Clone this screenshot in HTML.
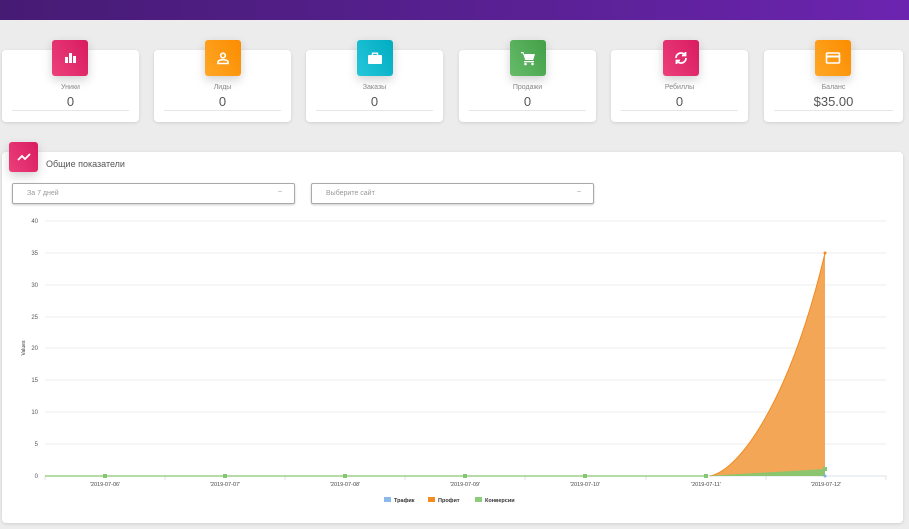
<!DOCTYPE html>
<html><head><meta charset="utf-8"><style>
*{box-sizing:border-box;margin:0;padding:0}
body{width:909px;height:529px;overflow:hidden;background:#ececec;font-family:"Liberation Sans","DejaVu Sans",sans-serif;position:relative}
.hdr{position:absolute;left:0;top:0;width:909px;height:20px;background:linear-gradient(90deg,#461b74,#5a2195 60%,#6c24b0)}
.card{position:absolute;top:50px;height:72px;background:#fff;border-radius:4px;box-shadow:0 1px 3px rgba(0,0,0,.12)}
.ic{position:absolute;top:-10px;width:36px;height:36px;border-radius:3px;box-shadow:0 4px 10px rgba(0,0,0,.18);display:flex;align-items:center;justify-content:center}
.lbl{position:absolute;top:34px;width:100%;text-align:center;font-size:7px;color:#888}
.val{position:absolute;top:44px;width:100%;text-align:center;font-size:13px;color:#555}
.ln{position:absolute;left:10px;right:10px;top:60px;border-top:1px solid #e6e6e6}
.pink{background:linear-gradient(60deg,#ec407a,#d81b60)}
.orange{background:linear-gradient(60deg,#ffa726,#fb8c00)}
.cyan{background:linear-gradient(60deg,#26c6da,#00acc1)}
.green{background:linear-gradient(60deg,#66bb6a,#43a047)}
.big{position:absolute;left:2px;top:152px;width:901px;height:371px;background:#fff;border-radius:4px;box-shadow:0 1px 3px rgba(0,0,0,.12)}
.sel{position:absolute;top:183px;height:21px;border:1px solid #aaa;border-radius:2px;background:#fff;box-shadow:0 1px 2px rgba(0,0,0,.2);font-size:7px;color:#999;padding:6px 14px}
.sel span{position:absolute;right:12px;top:4px;font-size:7px}
</style></head><body>
<div class="hdr"></div>

<div class="card" style="left:2px;width:137px"><div class="ic pink" style="left:50px"><svg width="14" height="14" viewBox="0 0 14 14" fill="#fff"><rect x="2" y="6" width="3" height="6"/><rect x="6" y="2" width="3" height="10"/><rect x="10" y="5" width="3" height="7"/></svg></div><div class="lbl">Уники</div><div class="val">0</div><div class="ln"></div></div>
<div class="card" style="left:154px;width:137px"><div class="ic orange" style="left:51px"><svg width="14" height="14" viewBox="0 0 14 14" fill="none" stroke="#fff" stroke-width="1.6"><circle cx="7" cy="4.5" r="2.3"/><path d="M2 12.5v-1.5c0-1.5 3-2.3 5-2.3s5 .8 5 2.3v1.5z"/></svg></div><div class="lbl">Лиды</div><div class="val">0</div><div class="ln"></div></div>
<div class="card" style="left:306px;width:137px"><div class="ic cyan" style="left:51px"><svg width="16" height="14" viewBox="0 0 16 14" fill="#fff"><rect x="1" y="4" width="14" height="9" rx="1"/><path d="M5.5 4V2.2h5V4" stroke="#fff" stroke-width="1.4" fill="none"/></svg></div><div class="lbl">Заказы</div><div class="val">0</div><div class="ln"></div></div>
<div class="card" style="left:459px;width:137px"><div class="ic green" style="left:51px"><svg width="16" height="16" viewBox="0 0 16 16" fill="#fff"><path d="M1 2h2.5l.6 2H15l-1.8 6H5.2L3 3.4H1z"/><rect x="4" y="11" width="10" height="1.3"/><circle cx="5.5" cy="14" r="1.3"/><circle cx="12.5" cy="14" r="1.3"/></svg></div><div class="lbl">Продажи</div><div class="val">0</div><div class="ln"></div></div>
<div class="card" style="left:611px;width:137px"><div class="ic pink" style="left:52px"><svg width="16" height="16" viewBox="0 0 16 16" fill="none" stroke="#fff" stroke-width="1.8"><path d="M3 8a5 5 0 0 1 9-3"/><path d="M13 8a5 5 0 0 1-9 3"/><path d="M12.5 2v3.5H9" /><path d="M3.5 14v-3.5H7"/></svg></div><div class="lbl">Ребиллы</div><div class="val">0</div><div class="ln"></div></div>
<div class="card" style="left:764px;width:139px"><div class="ic orange" style="left:51px"><svg width="16" height="14" viewBox="0 0 16 14" fill="none" stroke="#fff" stroke-width="1.6"><rect x="1.5" y="2" width="13" height="10" rx="1"/><path d="M1.5 5.5h13" stroke-width="2"/></svg></div><div class="lbl">Баланс</div><div class="val">$35.00</div><div class="ln"></div></div>

<div class="big"></div>
<div class="ic pink" style="position:absolute;left:9px;top:142px;width:29px;height:30px"><svg width="14" height="10" viewBox="0 0 14 10" fill="none" stroke="#fff" stroke-width="1.8"><path d="M1 8l4-4 3 3 5-5"/></svg></div>
<div style="position:absolute;left:46px;top:159px;font-size:9px;color:#555">Общие показатели</div>
<div class="sel" style="left:12px;width:283px">За 7 дней<span>–</span></div>
<div class="sel" style="left:311px;width:283px">Выберите сайт<span>–</span></div>

<svg style="position:absolute;left:0;top:0" width="909" height="529" font-family="Liberation Sans, sans-serif">
<g stroke="#eeeeee" stroke-width="1">
<line x1="45" x2="886" y1="221" y2="221"/><line x1="45" x2="886" y1="253" y2="253"/><line x1="45" x2="886" y1="285" y2="285"/><line x1="45" x2="886" y1="317" y2="317"/><line x1="45" x2="886" y1="348" y2="348"/><line x1="45" x2="886" y1="380" y2="380"/><line x1="45" x2="886" y1="412" y2="412"/><line x1="45" x2="886" y1="444" y2="444"/>
</g>
<line x1="45" x2="886" y1="476" y2="476" stroke="#dde3ea"/>
<g stroke="#dde3ea"><line x1="45" x2="45" y1="476" y2="480"/><line x1="165" x2="165" y1="476" y2="480"/><line x1="285" x2="285" y1="476" y2="480"/><line x1="405" x2="405" y1="476" y2="480"/><line x1="525" x2="525" y1="476" y2="480"/><line x1="646" x2="646" y1="476" y2="480"/><line x1="766" x2="766" y1="476" y2="480"/><line x1="886" x2="886" y1="476" y2="480"/></g>
<g font-size="6" fill="#555" text-anchor="end"><text x="38" y="223">40</text><text x="38" y="255">35</text><text x="38" y="287">30</text><text x="38" y="319">25</text><text x="38" y="350">20</text><text x="38" y="382">15</text><text x="38" y="414">10</text><text x="38" y="446">5</text><text x="38" y="478">0</text></g>
<text x="25" y="348" font-size="5" fill="#333" transform="rotate(-90 25 348)" text-anchor="middle">Values</text>
<g font-size="5.5" fill="#444" text-anchor="middle"><text x="105" y="486">'2019-07-06'</text><text x="225" y="486">'2019-07-07'</text><text x="345" y="486">'2019-07-08'</text><text x="465" y="486">'2019-07-09'</text><text x="585" y="486">'2019-07-10'</text><text x="706" y="486">'2019-07-11'</text><text x="826" y="486">'2019-07-12'</text></g>
<path d="M706 476 L710 476 C740 470 790 400 825 253 L825 476 Z" fill="#f39c45" opacity=".9"/>
<path d="M710 476 C740 470 790 400 825 253" fill="none" stroke="#ef8a1f" stroke-width="1"/>
<path d="M706 476 L825 469 L825 476 Z" fill="#8bc56d"/>
<line x1="45" x2="706" y1="476" y2="476" stroke="#8bc56d" stroke-width="1.2"/>
<g fill="#86c776"><rect x="103" y="474" width="4" height="4"/><rect x="223" y="474" width="4" height="4"/><rect x="343" y="474" width="4" height="4"/><rect x="463" y="474" width="4" height="4"/><rect x="583" y="474" width="4" height="4"/><rect x="704" y="474" width="4" height="4"/><rect x="823" y="467" width="4" height="4"/></g>
<circle cx="825" cy="253" r="1.5" fill="#ef8a1f"/>
<circle cx="825" cy="476" r="1.5" fill="#7fb3e8"/>
<g font-size="5.5" font-weight="bold" fill="#333"><rect x="384" y="497" width="7" height="5" fill="#8bb9ea"/><text x="394" y="502">Трафик</text><rect x="428" y="497" width="7" height="5" fill="#f58c22"/><text x="438" y="502">Профит</text><rect x="475" y="497" width="7" height="5" fill="#8ccc7c"/><text x="485" y="502">Конверсии</text></g>
</svg>
</body></html>
